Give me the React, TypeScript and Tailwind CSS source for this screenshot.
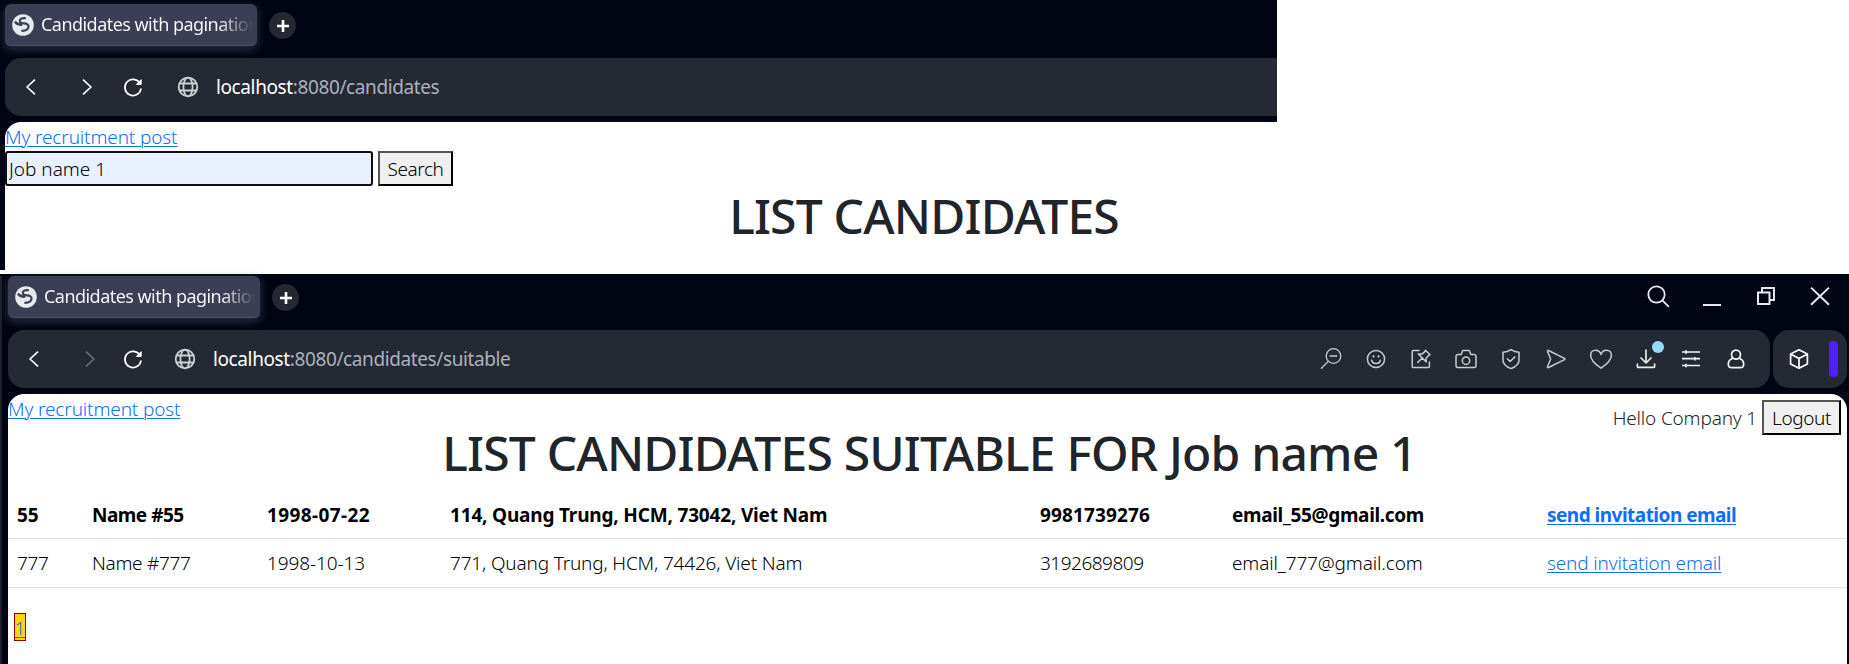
import type { ReactNode } from "react";

function Icon({ children, w = 1.5, className = "" }: { children: ReactNode; w?: number; className?: string }) {
  return (
    <svg
      viewBox="0 0 24 24"
      fill="none"
      stroke="currentColor"
      strokeWidth={w}
      strokeLinecap="round"
      strokeLinejoin="round"
      className={`size-6 shrink-0 ${className}`}
    >
      {children}
    </svg>
  );
}

function Tab() {
  return (
    <div className="flex h-[42px] w-[252px] items-center rounded-md border-b border-[#4d4f69] bg-[#3c3e55] pl-[7px] shadow-[0_3px_9px_1px_rgba(90,92,115,0.45)]">
      <svg viewBox="0 0 22 22" className="size-[22px] shrink-0" fill="none" stroke="#3c3e55" strokeLinecap="round">
        <circle cx="11" cy="11" r="10.8" fill="#e6e9ed" stroke="none" />
        <path
          d="M13 4.200C10.500 3.800 8 4.800 7.800 6.600c-.2 2.200 1.800 2.600 4.200 2.800 2.800.2 4.800 1.200 4.500 3.400-.3 2.400-3 3.800-6.300 4"
          strokeWidth="2.200"
        />
        <path d="M3.600 8.400c1.600 2 3.400 2.400 5.600 2.200" strokeWidth="2.600" />
      </svg>
      <div className="-mt-[2px] ml-[7px] w-[216px] bg-linear-to-r from-white from-82% to-transparent to-98% bg-clip-text text-[18px] leading-[28px] font-normal tracking-[-0.54px] whitespace-nowrap text-transparent">
        Candidates with pagination
      </div>
    </div>
  );
}

function NewTab() {
  return (
    <div className="ml-3 flex size-[27px] items-center justify-center rounded-full bg-[#252832] text-white">
      <svg viewBox="0 0 12 12" className="size-3" stroke="currentColor" strokeWidth="2.6">
        <path d="M6 0v12M0 6h12" />
      </svg>
    </div>
  );
}

function Back() {
  return (
    <Icon w={1.6} className="text-white">
      <path d="M16 4.600 8 12l8 7.400" strokeLinecap="butt" />
    </Icon>
  );
}

function Forward({ className }: { className: string }) {
  return (
    <Icon w={1.6} className={className}>
      <path d="m8 4.600 8 7.400L8 19.400" strokeLinecap="butt" />
    </Icon>
  );
}

function Reload() {
  return (
    <Icon w={1.7} className="text-white">
      <path d="M18.900 8.200A8.100 8.100 0 1 0 20 13.500" strokeLinecap="butt" />
      <path d="M20.200 5v4.400h-4.400z" fill="currentColor" strokeWidth="1" />
    </Icon>
  );
}

function Globe() {
  return (
    <Icon w={1.8} className="text-[#ced1d2]">
      <circle cx="12" cy="12" r="9.300" />
      <ellipse cx="12" cy="12" rx="4.600" ry="9.300" />
      <path d="M3.800 8.500h16.400M3.800 15.500h16.400" />
    </Icon>
  );
}

function Url({ path }: { path: string }) {
  return (
    <div className="text-[19px] leading-7 font-normal tracking-[-0.39px] whitespace-nowrap text-[#aab2bf]">
      <span className="text-white">localhost</span>
      {path}
    </div>
  );
}

const toolIcons: ReactNode[] = [
  <Icon w={1.3}>
    <circle cx="14.500" cy="9" r="7.300" />
    <path d="M11.200 9h6.600M9.200 14.400 2.400 21.200" />
  </Icon>,
  <Icon>
    <circle cx="12" cy="12" r="8.600" />
    <path d="M7.600 13.200c.6 2.300 2.200 3.300 4.400 3.300s3.800-1 4.400-3.300" />
    <path d="M9.500 9.200v.4M14.500 9.200v.4" strokeWidth="2" />
  </Icon>,
  <Icon>
    <path d="M10 3.600H4.200a1 1 0 0 0-1 1v15a1 1 0 0 0 1 1h15.200a1 1 0 0 0 1-1V15" />
    <path d="m16.400 3.200 4.600 4.600-1.400.6-2.500 2.800.1 3.700-7.900-7.900 3.700.1 2.800-2.500zM13 11.200 8.800 15.400" />
  </Icon>,
  <Icon>
    <path d="M4 7.400h3.200l1.200-3.100a1 1 0 0 1 1-.7h5.200a1 1 0 0 1 1 .7l1.200 3.100H20a2 2 0 0 1 2 2v9.200a2 2 0 0 1-2 2H4a2 2 0 0 1-2-2V9.400a2 2 0 0 1 2-2z" />
    <circle cx="12" cy="13.700" r="3.700" />
  </Icon>,
  <Icon>
    <path d="M12 2.600c2.500 1.700 5 2.500 8 2.600v8c0 3.800-4 6.800-8 8.400-4-1.600-8-4.600-8-8.400v-8c3-.1 5.500-.9 8-2.600z" />
    <path d="m8.300 11.800 2.800 2.700 4.700-4.600" />
  </Icon>,
  <Icon>
    <path d="M4.600 3.500c-.7-.4-1.400.2-1.100 1l2.900 6.700c.2.600.2 1 0 1.600l-2.900 6.700c-.3.800.4 1.400 1.100 1l15.900-7.800c.6-.3.600-1.100 0-1.400z" />
  </Icon>,
  <Icon>
    <path d="M12 21.200C7 17.800 1.600 13.400 1.600 8.200c0-3 2.200-5 4.800-5 2.800 0 4.900 1.900 5.600 4.300.7-2.400 2.800-4.300 5.600-4.300 2.600 0 4.800 2 4.800 5 0 5.200-5.400 9.600-10.400 13z" />
  </Icon>,
  <div className="relative size-6">
    <Icon w={1.7} className="text-[#e8eaea]">
      <path d="M12 3v12.500M7 11l5 4.800 5-4.800M3.400 17.200v2.200a1 1 0 0 0 1 1h15.200a1 1 0 0 0 1-1v-2.200" />
    </Icon>
    <div className="absolute -top-[6px] left-[18px] size-3 rounded-full bg-[#94dcff]" />
  </div>,
  <Icon w={1.7} className="text-[#f4f5f5]">
    <path d="M3 5h18M3 11.700h18M3 18.500h18M7 3.200v3.600M15.800 9.900v3.600M7 16.700v3.600" strokeLinecap="butt" />
  </Icon>,
  <Icon w={1.7} className="text-[#f4f5f5]">
    <circle cx="12" cy="7.600" r="4.500" />
    <path d="M8.600 11.200C6 12.300 4.300 14.800 4.300 17.200c0 2.200 1.400 3.400 3.400 3.400h8.600c2 0 3.400-1.200 3.400-3.400 0-2.400-1.700-4.900-4.300-6" />
  </Icon>,
];

function PageLink({ className = "", children }: { className?: string; children: ReactNode }) {
  return (
    <a href="#" className={`text-[#0d6efd] underline decoration-1 underline-offset-2 ${className}`}>
      {children}
    </a>
  );
}

const buttonStyle =
  "flex shrink-0 items-center justify-center border-2 border-t-[#555] border-r-black border-b-black border-l-[#555] bg-[#efefef] text-black whitespace-nowrap";

const cols = "grid grid-cols-[75px_175px_183px_590px_192px_315px_1fr]";

const rows = [
  {
    row: "font-bold pt-[10px]",
    cells: ["55", "Name #55", "1998-07-22", "114, Quang Trung, HCM, 73042, Viet Nam", "9981739276", "email_55@gmail.com"],
    track: ["tracking-[-0.2px]", "tracking-[-0.5px]", "tracking-[0.39px]", "tracking-[-0.18px]", "tracking-[0.14px]", "tracking-[-0.33px]"],
    link: "tracking-[-0.52px]",
  },
  {
    row: "font-light pt-[9px]",
    cells: ["777", "Name #777", "1998-10-13", "771, Quang Trung, HCM, 74426, Viet Nam", "3192689809", "email_777@gmail.com"],
    track: ["tracking-[-0.4px]", "tracking-[-0.3px]", "tracking-[-0.1px]", "tracking-[-0.17px]", "tracking-[-0.5px]", "tracking-[-0.13px]"],
    link: "tracking-[-0.16px]",
  },
];

function TopWindow() {
  return (
    <section className="h-[270px]">
      <div className="h-[122px] w-[1277px] bg-[#010412] pt-1 pl-[5px]">
        <div className="flex h-[54px] items-start">
          <Tab />
          <div className="mt-[8px] flex">
            <NewTab />
          </div>
        </div>
        <div className="flex h-[58px] items-center rounded-l-2xl bg-[#252934] pl-[14px] text-white">
          <Back />
          <div className="ml-8 flex">
            <Forward className="text-white" />
          </div>
          <div className="ml-[22px] flex">
            <Reload />
          </div>
          <div className="ml-[31px] flex">
            <Globe />
          </div>
          <div className="ml-[16px]">
            <Url path=":8080/candidates" />
          </div>
        </div>
      </div>
      <div className="h-[148px] w-8 bg-[#010412] pl-[5px]">
        <div className="h-full w-[1842px] rounded-tl-2xl bg-white">
          <div className="h-[29px] leading-[30px]">
            <PageLink className="tracking-[-0.13px]">My recruitment post</PageLink>
          </div>
          <div className="flex gap-[5px]">
            <input
              defaultValue="Job name 1"
              className="h-[35px] w-[368px] rounded-[3px] border-2 border-[#101010] bg-[#e8f0fe] px-[2px] tracking-[0px] text-black outline-none"
            />
            <button className={`${buttonStyle} h-[35px] w-[75px] pt-[2px] tracking-[-0.45px]`}>Search</button>
          </div>
          <h1 className="pr-1 text-center text-[48px] leading-[60px] font-medium tracking-[-0.82px]">LIST CANDIDATES</h1>
        </div>
      </div>
    </section>
  );
}

function BottomWindow() {
  return (
    <section className="mt-1 flex h-[390px] bg-[#010412]">
      <div className="mt-[2px] w-[2px] shrink-0 bg-[#1e212c]" />
      <div className="mr-[2px] ml-[6px] flex w-[1839px] flex-col">
        <div className="flex h-[56px] items-start pt-[2px]">
          <Tab />
          <div className="mt-[8px] flex">
            <NewTab />
          </div>
          <div className="mt-[8px] mr-[15px] ml-auto flex gap-[30px] text-[#e6eaf0]">
            <Icon w={1.8}>
              <circle cx="10.500" cy="10.500" r="8.200" />
              <path d="m16.600 16.600 5.800 5.800" />
            </Icon>
            <Icon w={2}>
              <path d="M3 21h18" strokeLinecap="butt" />
            </Icon>
            <Icon w={2}>
              <path d="M4 8.500h11.500v11.500H4zM8 8.500V4h12v12h-4.500" strokeLinejoin="miter" />
            </Icon>
            <Icon w={2}>
              <path d="m3 3.600 18 17.200M21 3.600 3 20.800" strokeLinecap="butt" />
            </Icon>
          </div>
        </div>
        <div className="flex h-[58px] gap-[3px]">
          <div className="flex w-[1762px] items-center rounded-2xl bg-[#252934] pl-[14px]">
            <Back />
            <div className="ml-8 flex">
              <Forward className="text-[#6a6c75]" />
            </div>
            <div className="ml-[19px] flex">
              <Reload />
            </div>
            <div className="ml-[28px] flex">
              <Globe />
            </div>
            <div className="ml-[16px]">
              <Url path=":8080/candidates/suitable" />
            </div>
            <div className="mr-[22px] ml-auto flex gap-[21px] text-[#c9cccd]">
              {toolIcons.map((icon, i) => (
                <div key={i}>{icon}</div>
              ))}
            </div>
          </div>
          <div className="flex flex-1 items-center rounded-2xl bg-[#252934] pl-[14px] text-white">
            <Icon w={1.7}>
              <path d="m12 2.800 8.400 4.300v9.800L12 21.200l-8.400-4.300V7.100zM3.600 7.100l8.400 4.300 8.400-4.300M12 11.400v9.800" />
            </Icon>
            <div className="ml-[18px] h-9 w-[9px] rounded bg-[#4d20fd]" />
          </div>
        </div>
        <div className="mt-[6px] h-[270px] rounded-t-2xl bg-white">
          <div className="flex h-[30px] justify-between leading-[30px]">
            <PageLink className="tracking-[-0.13px]">My recruitment post</PageLink>
            <div className="mt-[6px] mr-[6px] flex gap-[5px]">
              <span className="pt-[3px] tracking-[-0.17px]">Hello Company 1</span>
              <button className={`${buttonStyle} h-[35px] w-[79px] pt-[1px] tracking-[-0.4px]`}>Logout</button>
            </div>
          </div>
          <h1 className="mt-[-1px] h-[67px] pl-1 text-center text-[48px] leading-[60px] font-medium tracking-[-0.82px]">
            LIST CANDIDATES SUITABLE FOR Job name 1
          </h1>
          {rows.map((r) => (
            <div key={r.cells[0]} className={`${cols} h-[49px] border-b border-[#dee2e6] pl-[9px] leading-[30px] text-black ${r.row}`}>
              {r.cells.map((c, i) => (
                <div key={c} className={`whitespace-nowrap ${r.track[i]}`}>
                  {c}
                </div>
              ))}
              <div>
                <PageLink className={r.link}>send invitation email</PageLink>
              </div>
            </div>
          ))}
          <div className="mt-[25px] ml-[6px] flex h-[28px] w-3 justify-center border border-[#8b0000] bg-[#ffd700] leading-[28px]">
            <PageLink>1</PageLink>
          </div>
        </div>
      </div>
    </section>
  );
}

export default function App() {
  return (
    <main className="h-[664px] w-[1849px] overflow-hidden bg-white font-['Noto_Sans',sans-serif] text-[19px] font-light text-[#212529]">
      <TopWindow />
      <BottomWindow />
    </main>
  );
}
